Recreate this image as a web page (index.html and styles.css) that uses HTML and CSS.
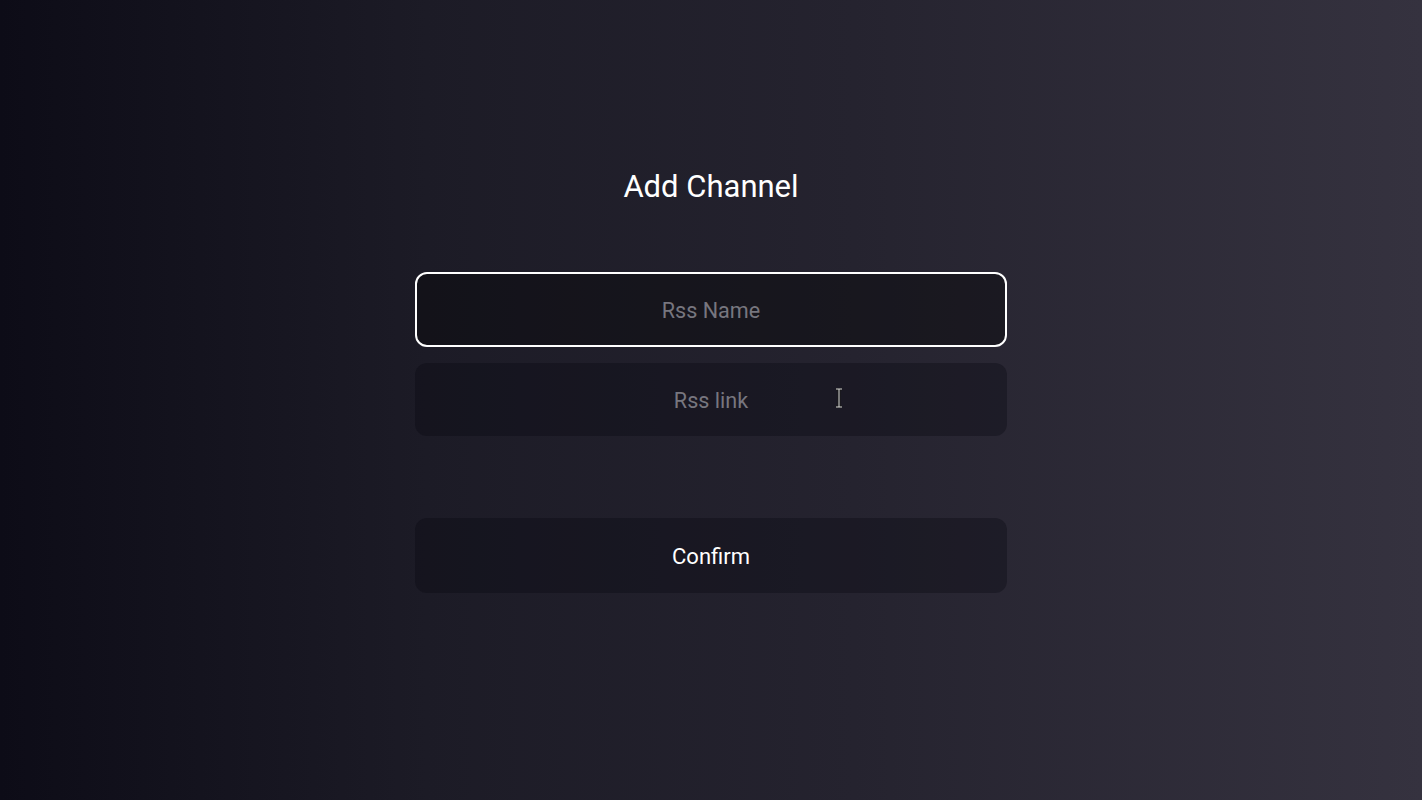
FILE: index.html
```html
<!DOCTYPE html>
<html lang="en">
<head>
    <meta charset="UTF-8">
    <meta name="viewport" content="width=device-width, initial-scale=1.0">
    <title>Add Channel</title>
    <link rel="stylesheet" href="styles.css">
</head>
<body>
    <main class="page">
        <h1 class="title">Add Channel</h1>

        <form class="channel-form">
            <input class="field field-active" type="text" placeholder="Rss Name">
            <div class="field-wrap">
                <input class="field" type="text" placeholder="Rss link">
                <!-- mouse cursor left in the capture -->
                <svg class="cursor" width="8" height="20" viewBox="0 0 8 20">
                    <path d="M1 1h6M1 19h6M4 1v18" stroke="#1a1a1a" stroke-width="3" fill="none"/>
                    <path d="M1 1h6M1 19h6M4 1v18" stroke="#d8d8d8" stroke-width="1" fill="none"/>
                </svg>
            </div>

            <button class="confirm" type="button">Confirm</button>
        </form>
    </main>
</body>
</html>
```

FILE: styles.css
```css
* {
    box-sizing: border-box;
}

html, body {
    height: 100%;
}

body {
    margin: 0;
    font-family: Roboto, "Liberation Sans", sans-serif;
    background: linear-gradient(90deg, #0d0c17 0%, #1c1b26 30%, #25232f 60%, #35323f 100%);
    color: #fff;
}

.page {
    display: flex;
    flex-direction: column;
    align-items: center;
    padding-top: 167px;
}

.title {
    margin: 0;
    font-size: 31px;
    font-weight: 400;
    line-height: 40px;
}

.channel-form {
    width: 592px;
    margin-top: 65px;
    display: flex;
    flex-direction: column;
}

.field-wrap {
    position: relative;
    margin-top: 16px;
}

.field {
    width: 100%;
    height: 73px;
    padding: 1px 0 0;
    border: none;
    border-radius: 12px;
    background: rgba(10, 10, 16, 0.35);
    color: #fff;
    font-family: inherit;
    font-size: 21.6px;
    text-align: center;
    outline: none;
}

.field::placeholder {
    color: #77767f;
}

.field-active {
    height: 75px;
    padding-top: 2px;
    border: 2px solid #fff;
    background: rgba(8, 8, 12, 0.45);
}

.cursor {
    position: absolute;
    left: 420px;
    top: 25px;
}

.confirm {
    margin-top: 82px;
    height: 75px;
    padding: 2px 0 0;
    border: none;
    border-radius: 12px;
    background: rgba(10, 10, 16, 0.35);
    color: #fff;
    font-family: inherit;
    font-size: 22px;
    cursor: pointer;
}
```
